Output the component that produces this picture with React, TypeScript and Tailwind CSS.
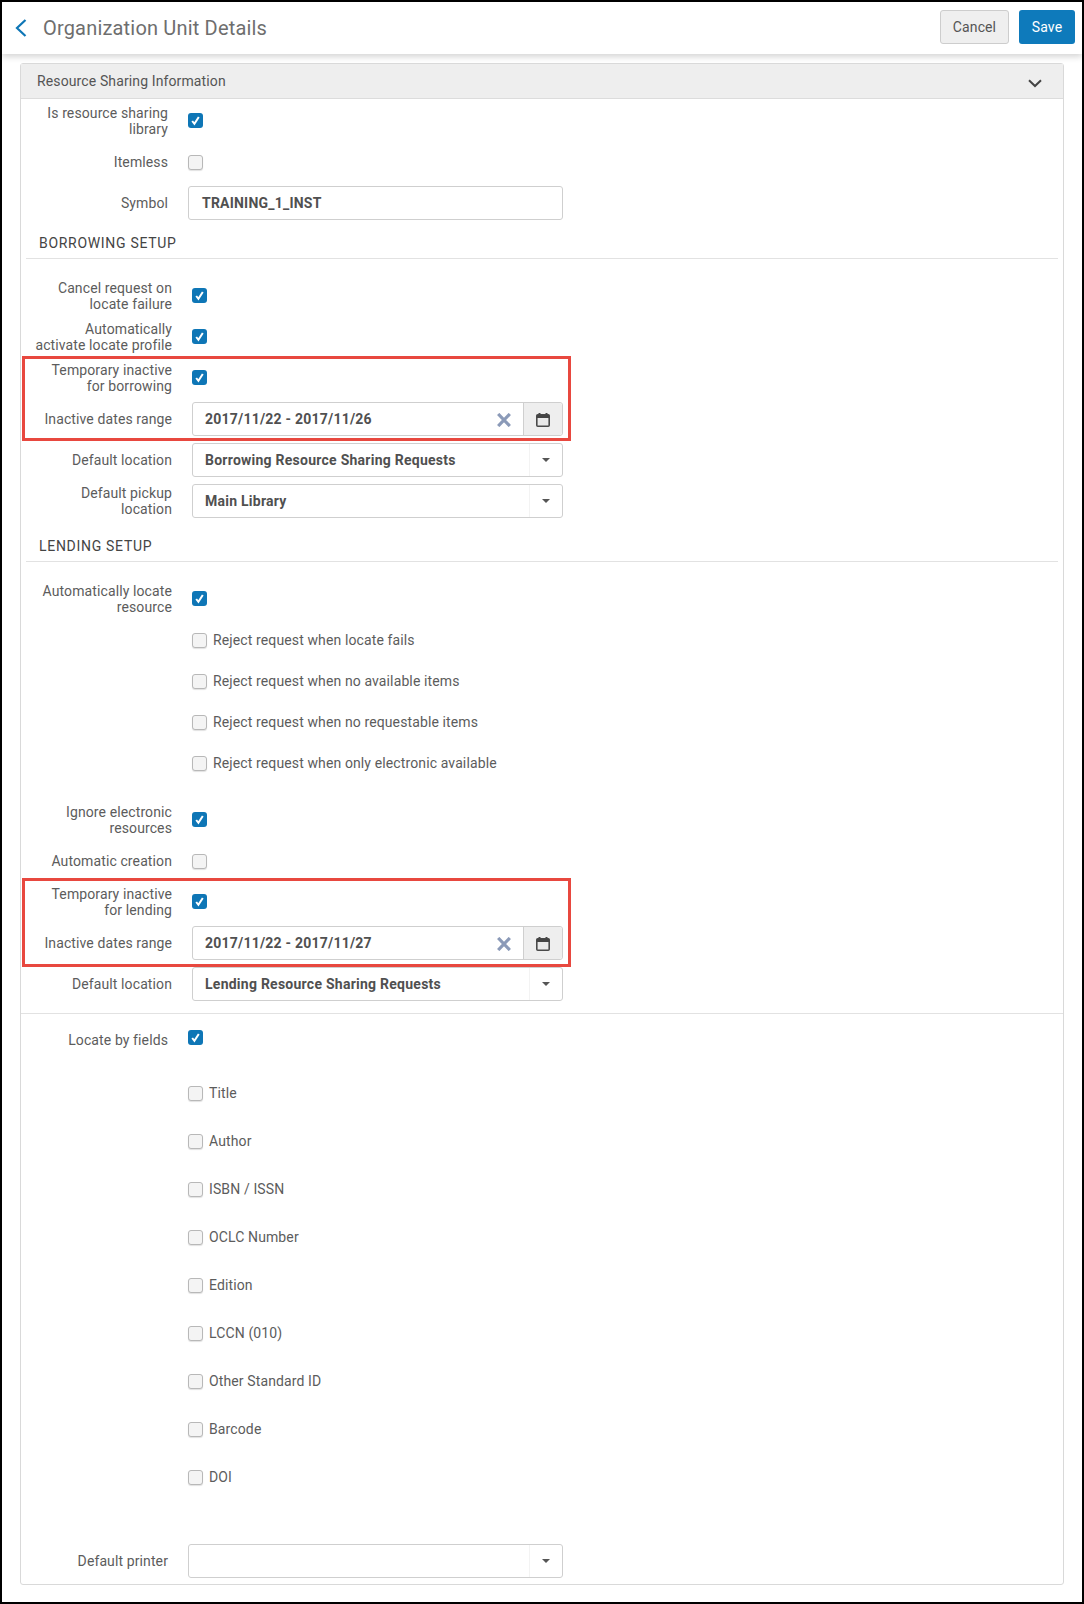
import { ReactNode } from "react";

const font = "font-['Roboto',sans-serif]";

function Checkbox({ checked, className = "" }: { checked?: boolean; className?: string }) {
  if (checked) {
    return (
      <span className={`flex h-[15px] w-[15px] shrink-0 -translate-y-px items-center justify-center rounded-[3px] bg-[#0e76b6] ${className}`}>
        <svg width="11" height="11" viewBox="0 0 11 11" fill="none">
          <path d="M2.2 6 L4.4 8.8 L8.8 2" stroke="white" strokeWidth="2" />
        </svg>
      </span>
    );
  }
  return (
    <span className={`block h-[15px] w-[15px] shrink-0 rounded-[3px] border border-[#b8b8b8] bg-[#f4f4f4] shadow-[0_1px_1px_rgba(0,0,0,0.12)] ${className}`} />
  );
}

function Row({ label, children, sub }: { label?: ReactNode; children: ReactNode; sub?: boolean }) {
  return (
    <div className="flex h-[34px] items-center gap-5">
      <div className={`${sub ? "w-[146px]" : "w-[147px]"} shrink-0 text-right text-sm leading-4 tracking-[0.11px] text-[#5c5c5c]`}>{label}</div>
      {children}
    </div>
  );
}

function Caret() {
  return (
    <span className="flex h-full w-[33px] items-center justify-center border-l border-[#f3f3f3]">
      <span className="block h-0 w-0 border-x-[4px] border-t-[4px] border-x-transparent border-t-[#555]" />
    </span>
  );
}

function SelectBox({ value, w = "w-[371px]" }: { value?: string; w?: string }) {
  return (
    <div className={`flex h-[34px] ${w} items-center rounded-[3px] border border-[#cfcfcf] bg-white`}>
      <span className="flex-1 pl-3 text-sm font-bold tracking-[0.25px] text-[#505050]">{value}</span>
      <Caret />
    </div>
  );
}

function DateRange({ value }: { value: string }) {
  return (
    <div className="flex h-[34px] w-[371px] items-center rounded-[3px] border border-[#cfcfcf] bg-white">
      <span className="flex-1 pl-3 text-sm font-bold tracking-[0.22px] text-[#505050]">{value}</span>
      <svg className="mr-[12px] mt-[2px]" width="14" height="14" viewBox="0 0 14 14" fill="none">
        <path d="M1.2 1 L12.8 13 M12.8 1 L1.2 13" stroke="#8b9ab8" strokeWidth="3.2" />
      </svg>
      <span className="flex h-full w-[39px] items-center justify-center rounded-r-[3px] border-l border-[#cfcfcf] bg-[#eeeeee]">
        <svg className="mt-[2px]" width="14" height="14" viewBox="0 0 14 14" fill="none">
          <path d="M3.5 0 V3 M10.5 0 V3" stroke="#444" strokeWidth="2" />
          <rect x="0.8" y="1.8" width="12.4" height="11.4" rx="1" fill="#e9e9e9" stroke="#4a4a4a" strokeWidth="1.6" />
          <rect x="0.8" y="1.8" width="12.4" height="3.2" fill="#444" />
        </svg>
      </span>
    </div>
  );
}

function SectionTitle({ children, top }: { children: ReactNode; top: string }) {
  return (
    <div className={`mx-[5px] ${top} border-b border-[#e2e2e2] pb-[7px] pl-[13px] text-sm leading-4 tracking-[0.7px] text-[#444]`}>
      {children}
    </div>
  );
}

const rejectRows = [
  "Reject request when locate fails",
  "Reject request when no available items",
  "Reject request when no requestable items",
  "Reject request when only electronic available",
];

const locateFields = ["Title", "Author", "ISBN / ISSN", "OCLC Number", "Edition", "LCCN (010)", "Other Standard ID", "Barcode", "DOI"];

export default function App() {
  return (
    <div className={`h-[1604px] w-[1084px] border-2 border-black bg-white ${font}`}>
      <div className="relative flex h-[52px] items-center justify-between pl-[13px] pr-[7px] shadow-[0_3px_6px_rgba(0,0,0,0.16)]">
        <div className="flex items-center gap-4">
          <svg width="12" height="18" viewBox="0 0 12 18" fill="none">
            <path d="M10.5 1 L2 9 L10.5 17" stroke="#0e76b6" strokeWidth="2.2" />
          </svg>
          <h1 className="text-xl font-normal tracking-[0.18px] text-[#6e6e6e]">Organization Unit Details</h1>
        </div>
        <div className="mb-0.5 flex gap-[10px]">
          <button className="h-[34px] w-[69px] rounded-[3px] border border-[#cdcdcd] bg-[#efefef] text-sm tracking-[0.11px] text-[#555]">Cancel</button>
          <button className="h-[34px] w-[56px] rounded-[3px] bg-[#0e7abb] text-sm tracking-[0.11px] text-white">Save</button>
        </div>
      </div>

      <div className="ml-[18px] mr-[18px] mt-[9px] h-[1522px] rounded-[3px] border border-[#d9d9d9]">
        <div className="flex h-[35px] items-center justify-between border-b border-[#dcdcdc] bg-[#eeeeee] pl-4 pr-[21px]">
          <span className="text-sm tracking-[0.12px] text-[#555]">Resource Sharing Information</span>
          <svg className="mt-1" width="14" height="9" viewBox="0 0 14 9" fill="none">
            <path d="M1 1.2 L7 7 L13 1.2" stroke="#444" strokeWidth="2" />
          </svg>
        </div>

        <div className="flex flex-col gap-[7px] pt-[5px]">
          <Row label={<>Is resource sharing<br />library</>}><Checkbox checked /></Row>
          <Row label="Itemless"><Checkbox /></Row>
          <Row label="Symbol">
            <div className="flex h-[34px] w-[375px] items-center rounded-[3px] border border-[#cfcfcf] pl-[13px] text-sm font-bold tracking-[0.22px] text-[#505050]">TRAINING_1_INST</div>
          </Row>
        </div>

        <SectionTitle top="mt-[15px]">BORROWING SETUP</SectionTitle>
        <div className="mx-[5px] mt-5 flex flex-col gap-[7px]">
          <Row sub label={<>Cancel request on<br />locate failure</>}><Checkbox checked /></Row>
          <Row sub label={<>Automatically<br />activate locate profile</>}><Checkbox checked /></Row>
          <div className="-mx-[4px] -my-[5px] flex w-[549px] flex-col gap-[7px] border-[3px] border-[#e8483f] px-px py-[2px]">
            <Row sub label={<>Temporary inactive<br />for borrowing</>}><Checkbox checked /></Row>
            <Row sub label="Inactive dates range"><DateRange value="2017/11/22 - 2017/11/26" /></Row>
          </div>
          <Row sub label="Default location"><SelectBox value="Borrowing Resource Sharing Requests" /></Row>
          <Row sub label={<>Default pickup<br />location</>}><SelectBox value="Main Library" /></Row>
        </div>

        <SectionTitle top="mt-5">LENDING SETUP</SectionTitle>
        <div className="mx-[5px] mt-5 flex flex-col gap-[7px]">
          <Row sub label={<>Automatically locate<br />resource</>}><Checkbox checked /></Row>
          {rejectRows.map((text) => (
            <div key={text} className="ml-[166px] flex h-[34px] items-center gap-[6px] text-sm tracking-[0.12px] text-[#5c5c5c]">
              <Checkbox />
              {text}
            </div>
          ))}
          <div className="mt-4">
            <Row sub label={<>Ignore electronic<br />resources</>}><Checkbox checked /></Row>
          </div>
          <Row sub label="Automatic creation"><Checkbox /></Row>
          <div className="-mx-[4px] -my-[7px] flex w-[549px] flex-col gap-[7px] border-[3px] border-[#e8483f] px-px py-[4px]">
            <Row sub label={<>Temporary inactive<br />for lending</>}><Checkbox checked /></Row>
            <Row sub label="Inactive dates range"><DateRange value="2017/11/22 - 2017/11/27" /></Row>
          </div>
          <Row sub label="Default location"><SelectBox value="Lending Resource Sharing Requests" /></Row>
        </div>

        <div className="mt-[12px] border-t border-[#e2e2e2]" />

        <div className="mt-[10px] flex h-[34px] items-start gap-5">
          <div className="mt-[8px] w-[147px] shrink-0 text-right text-sm leading-4 tracking-[0.11px] text-[#5c5c5c]">Locate by fields</div>
          <Checkbox checked className="mt-[7px]" />
        </div>

        <div className="ml-[167px] mt-[18px] flex flex-col gap-[14px]">
          {locateFields.map((field) => (
            <div key={field} className="flex h-[34px] items-center gap-[6px] text-sm tracking-[0.12px] text-[#5c5c5c]">
              <Checkbox />
              {field}
            </div>
          ))}
        </div>

        <div className="mt-[50px]">
          <Row label="Default printer"><SelectBox w="w-[375px]" /></Row>
        </div>
      </div>
    </div>
  );
}
